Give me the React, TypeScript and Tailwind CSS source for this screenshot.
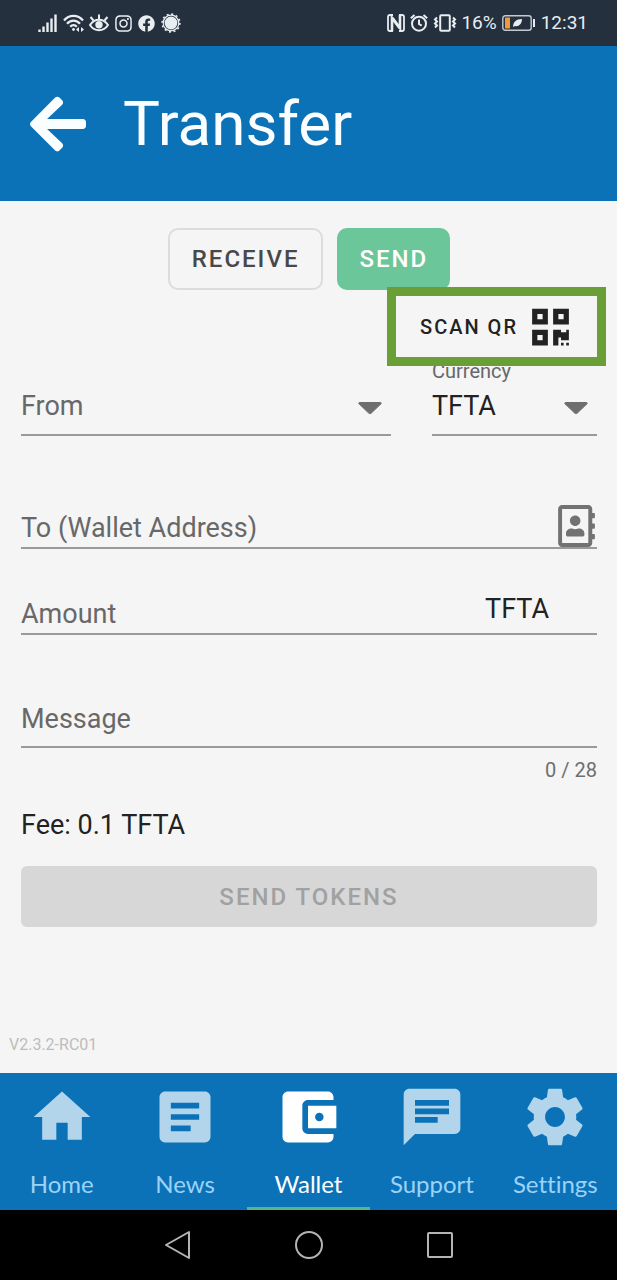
import { useState } from "react";
import type { ReactNode } from "react";
import { FaArrowLeft, FaFacebook, FaInstagram, FaQrcode, FaRegAddressBook } from "react-icons/fa";

const MAX_MESSAGE = 28;

const tabs = [
  { name: "Home", path: "M10 20v-6h4v6h5v-8h3L12 3 2 12h3v8z" },
  {
    name: "News",
    path: "M19 3H5c-1.1 0-2 .9-2 2v14c0 1.1.9 2 2 2h14c1.1 0 2-.9 2-2V5c0-1.1-.9-2-2-2zM14 17H7v-2h7v2zm3-4H7v-2h10v2zm0-4H7V7h10v2z",
  },
  {
    name: "Wallet",
    path: "M21 18v1c0 1.1-.9 2-2 2H5c-1.11 0-2-.9-2-2V5c0-1.1.89-2 2-2h14c1.1 0 2 .9 2 2v1h-9c-1.11 0-2 .9-2 2v8c0 1.1.89 2 2 2h9zm-9-2h10V8H12v8zm4-2.5c-.83 0-1.5-.67-1.5-1.5s.67-1.5 1.5-1.5 1.5.67 1.5 1.5-.67 1.5-1.5 1.5z",
  },
  {
    name: "Support",
    path: "M20 2H4c-1.1 0-1.99.9-1.99 2L2 22l4-4h14c1.1 0 2-.9 2-2V4c0-1.1-.9-2-2-2zM6 6h12v2H6V6zm0 3h12v2H6V9zm0 3h8v2H6v-2z",
  },
  {
    name: "Settings",
    path: "M19.43 12.98c.04-.32.07-.64.07-.98s-.03-.66-.07-.98l2.11-1.65c.19-.15.24-.42.12-.64l-2-3.46c-.12-.22-.39-.3-.61-.22l-2.49 1c-.52-.4-1.08-.73-1.69-.98l-.38-2.65C14.46 2.18 14.25 2 14 2h-4c-.25 0-.46.18-.49.42l-.38 2.65c-.61.25-1.17.59-1.69.98l-2.49-1c-.23-.09-.49 0-.61.22l-2 3.46c-.13.22-.07.49.12.64l2.11 1.65c-.04.32-.07.65-.07.98s.03.66.07.98l-2.11 1.65c-.19.15-.24.42-.12.64l2 3.46c.12.22.39.3.61.22l2.49-1c.52.4 1.08.73 1.69.98l.38 2.65c.03.24.24.42.49.42h4c.25 0 .46-.18.49-.42l.38-2.65c.61-.25 1.17-.59 1.69-.98l2.49 1c.23.09.49 0 .61-.22l2-3.46c.12-.22.07-.49-.12-.64l-2.11-1.65zM12 15.5c-1.93 0-3.5-1.57-3.5-3.5s1.57-3.5 3.5-3.5 3.5 1.57 3.5 3.5-1.57 3.5-3.5 3.5z",
  },
];

function StatusBar() {
  return (
    <div className="flex h-[46px] items-center justify-between bg-[#24303d] pr-[29px] pl-[38px] text-[#e8edf2]">
      <div className="flex items-center gap-[5px]">
        <svg viewBox="0 0 20 18" className="h-[18px] w-5" stroke="currentColor" strokeWidth="2.400">
          <path d="M1.500 18v-2.500M5.500 18v-5.500M9.500 18V8.500M13.500 18V4.500M17.500 18V.5" />
        </svg>
        <svg viewBox="0 0 21 18" className="h-[18px] w-[21px]" fill="none" stroke="currentColor" strokeWidth="2.200">
          <path d="M1 6.500C6 .3 15 .3 20 6.500M4 9.700c3.500-4.200 9.500-4.200 13 0M7.200 12.800c2-2.300 4.700-2.300 6.600 0" />
          <circle cx="10.500" cy="15.500" r="1.400" fill="currentColor" stroke="none" />
          <path d="M13 15.500l3-2.500v5zM21 15.500l-3-2.500v5z" fill="currentColor" stroke="none" />
        </svg>
        <svg viewBox="0 0 20 18" className="h-[18px] w-5" fill="none" stroke="currentColor" strokeWidth="2">
          <path d="M1 11c4.500-7 13.500-7 18 0-4.500 7-13.500 7-18 0z" />
          <path d="M10 5V.5M4.500 6.500L1.500 3M15.500 6.500l3-3.500" />
          <circle cx="10" cy="10.800" r="3.700" fill="currentColor" stroke="none" />
        </svg>
        <FaInstagram className="h-[19px] w-[19px]" />
        <FaFacebook className="h-[17px] w-[17px]" />
        <svg viewBox="0 0 20 20" className="ml-px h-5 w-5" fill="none" stroke="currentColor">
          <circle cx="10" cy="10" r="6.400" fill="currentColor" stroke="none" />
          <circle cx="10" cy="10" r="7.800" strokeWidth="1.200" />
          <circle cx="10" cy="10" r="8.900" strokeWidth="1.600" strokeDasharray="2 2.660" />
        </svg>
      </div>
      <div className="flex items-center gap-1 font-[Roboto,sans-serif] text-[19px] leading-6">
        <svg viewBox="0 0 18 18" className="h-[18px] w-[18px]" fill="none" stroke="currentColor">
          <path
            d="M6 1H3Q1 1 1 3v12q0 2 2 2h3M12 1h3q2 0 2 2v12q0 2-2 2h-3"
            strokeWidth="1.800"
          />
          <path d="M5 17V4l7.500 10" strokeWidth="2.600" />
          <path d="M5.500 4l7.500 10V1" strokeWidth="2.600" />
        </svg>
        <svg viewBox="0 0 18 18" className="mx-px h-[18px] w-[18px]" fill="none" stroke="currentColor" strokeWidth="2">
          <circle cx="9" cy="9.700" r="7" />
          <path d="M9 5.500v4.500l2.700 1.700M.8 4.200L4.500 1M17.200 4.200L13.500 1" />
        </svg>
        <svg viewBox="0 0 24 18" className="h-[18px] w-6" fill="none" stroke="currentColor" strokeWidth="2">
          <rect x="7.200" y="1.200" width="9.600" height="15.600" rx="1" />
          <path d="M4 3.500L2 5.500 4 7.500 2 9.500l2 2-2 2M20 3.500l2 2-2 2 2 2-2 2 2 2" />
        </svg>
        <span>16%</span>
        <svg viewBox="0 0 34 16" className="ml-px h-4 w-[34px]" fill="none">
          <rect x=".8" y=".8" width="28.400" height="14.400" rx="2.500" stroke="#c3c9ce" strokeWidth="1.400" />
          <rect x="3" y="2.500" width="5" height="11" fill="#f0983a" />
          <path d="M11 12c0-5 3-8 9-8 0 5-3.500 8-7 7z" fill="currentColor" />
          <path d="M32 4v8" stroke="currentColor" strokeWidth="2" />
        </svg>
        <span className="ml-px">12:31</span>
      </div>
    </div>
  );
}

function Caret() {
  return (
    <svg viewBox="0 0 26 14" className="pointer-events-none absolute right-2 bottom-[19px] h-[14px] w-[26px]" aria-hidden="true">
      <path
        d="M2.500 1.500h21c.8 0 1 .8.5 1.300l-9.700 9.300c-.8.700-1.800.7-2.600 0L2 2.800c-.5-.5-.3-1.300.5-1.300z"
        fill="#6e6e6e"
        stroke="#6e6e6e"
      />
    </svg>
  );
}

function TextField({
  id,
  label,
  className,
  value,
  onChange,
  maxLength,
  children,
}: {
  id: string;
  label: string;
  className: string;
  value: string;
  onChange: (value: string) => void;
  maxLength?: number;
  children?: ReactNode;
}) {
  return (
    <div className={`flex border-b-2 border-[#9a9a9a] ${className}`}>
      <label htmlFor={id} className="self-end whitespace-nowrap text-[#686868]">
        {label}
      </label>
      <input
        id={id}
        type="text"
        value={value}
        maxLength={maxLength}
        onChange={(event) => onChange(event.target.value)}
        className="w-0 min-w-0 flex-1 self-end bg-transparent pl-3 outline-none"
      />
      {children}
    </div>
  );
}

export default function App() {
  const [mode, setMode] = useState("send");
  const [address, setAddress] = useState("");
  const [amount, setAmount] = useState("");
  const [message, setMessage] = useState("");
  const [active, setActive] = useState("Wallet");

  const modeStyle = (name: string) =>
    mode === name ? "border-[#6bc69a] bg-[#6bc69a] text-white" : "border-[#dcdcdc] text-[#484848]";

  return (
    <div className="flex min-h-screen flex-col bg-[#f5f5f5] font-[Roboto,sans-serif] text-[27px] leading-8 text-[#222222]">
      <StatusBar />
      <header className="flex h-[155px] items-center gap-[37px] bg-[#0b72b7] px-[30px] text-[#fafeff]">
        <button type="button" aria-label="Back">
          <FaArrowLeft className="h-16 w-14" />
        </button>
        <h1 className="text-[62px] leading-none">Transfer</h1>
      </header>

      <main className="flex flex-1 flex-col pt-[27px] pr-5 pl-[21px]">
        <div className="flex justify-center gap-[14px] text-2xl font-medium tracking-[2px]">
          <button
            type="button"
            onClick={() => setMode("receive")}
            className={`h-[62px] rounded-[10px] border-2 px-[22px] ${modeStyle("receive")}`}
          >
            RECEIVE
          </button>
          <button
            type="button"
            onClick={() => setMode("send")}
            className={`h-[62px] rounded-[10px] border-2 px-5 ${modeStyle("send")}`}
          >
            SEND
          </button>
        </div>

        <button
          type="button"
          className="relative z-10 mt-[6px] flex h-[61px] items-center gap-3 self-end pr-7 pl-6 text-xl font-medium tracking-[2px]"
        >
          <span className="pr-[2px]">SCAN QR</span>
          <FaQrcode className="h-[42px] w-[37px]" />
          <span className="pointer-events-none absolute -inset-[9px] border-9 border-[#6a9e37]" />
        </button>

        <div className="mt-[2px] flex items-end gap-[41px]">
          <div className="relative flex flex-1 border-b-2 border-[#9a9a9a] pb-3">
            <label htmlFor="from" className="text-[#686868]">
              From
            </label>
            <select id="from" defaultValue="" className="w-0 min-w-0 flex-1 appearance-none bg-transparent pl-3 outline-none">
              <option value=""></option>
            </select>
            <Caret />
          </div>
          <div className="relative flex w-[165px] flex-col border-b-2 border-[#9a9a9a] pb-3">
            <label htmlFor="currency" className="mb-[7px] text-xl leading-6 text-[#686868]">
              Currency
            </label>
            <select id="currency" defaultValue="TFTA" className="h-8 w-full appearance-none bg-transparent outline-none">
              <option value="TFTA">TFTA</option>
            </select>
            <Caret />
          </div>
        </div>

        <TextField id="address" label="To (Wallet Address)" className="h-[113px] pb-[3px]" value={address} onChange={setAddress}>
          <button type="button" aria-label="Address book" className="-mb-[3px] mr-[2px] self-end text-[#727272]">
            <FaRegAddressBook className="h-[42px] w-[37px]" />
          </button>
        </TextField>

        <TextField id="amount" label="Amount" className="h-[86px] pb-[3px]" value={amount} onChange={setAmount}>
          <span className="mr-12 self-end pb-[5px]">TFTA</span>
        </TextField>

        <TextField
          id="message"
          label="Message"
          className="h-[113px] pb-[11px]"
          value={message}
          onChange={setMessage}
          maxLength={MAX_MESSAGE}
        />
        <p className="mt-[10px] text-right text-xl leading-6 text-[#6e6e6e]">
          {message.length} / {MAX_MESSAGE}
        </p>

        <p className="mt-[27px]">Fee: 0.1 TFTA</p>

        <button
          type="button"
          disabled
          className="mt-[25px] h-[61px] w-full rounded-md bg-[#d7d7d7] text-2xl font-medium tracking-[2px] text-[#a1a1a1]"
        >
          SEND TOKENS
        </button>

        <p className="-ml-3 mt-auto pb-4 text-base leading-6 text-[#bdbdbd]">V2.3.2-RC01</p>
      </main>

      <nav className="grid h-[137px] grid-cols-5 bg-[#0b72b7] font-[Lato,sans-serif] text-2xl [font-variant-ligatures:none]">
        {tabs.map(({ name, path }) => (
          <button
            key={name}
            type="button"
            onClick={() => setActive(name)}
            className={`flex flex-col items-center border-b-[3px] pt-[10px] ${
              active === name ? "border-[#55b58c] text-white" : "border-transparent text-[#9bd3f8]"
            }`}
          >
            <svg
              viewBox="0 0 24 24"
              className={`h-[68px] w-[68px] ${active === name ? "fill-white" : "fill-[#b3d5ec]"}`}
              aria-hidden="true"
            >
              <path d={path} />
            </svg>
            <span className="mt-[17px] leading-8">{name}</span>
          </button>
        ))}
      </nav>

      <div className="grid h-[70px] grid-cols-3 items-center justify-items-center bg-black px-28 text-[#b4b4b4]">
        <button type="button" aria-label="System back">
          <svg viewBox="0 0 28 30" className="h-[30px] w-7" fill="none" stroke="currentColor" strokeWidth="2" strokeLinejoin="round">
            <path d="M25 2v26L2 15z" />
          </svg>
        </button>
        <button type="button" aria-label="System home">
          <svg viewBox="0 0 28 28" className="h-7 w-7" fill="none" stroke="currentColor" strokeWidth="2">
            <circle cx="14" cy="14" r="13" />
          </svg>
        </button>
        <button type="button" aria-label="Recent apps">
          <svg viewBox="0 0 28 28" className="h-7 w-7" fill="none" stroke="currentColor" strokeWidth="2">
            <rect x="2" y="2" width="24" height="24" rx="1" />
          </svg>
        </button>
      </div>
    </div>
  );
}
